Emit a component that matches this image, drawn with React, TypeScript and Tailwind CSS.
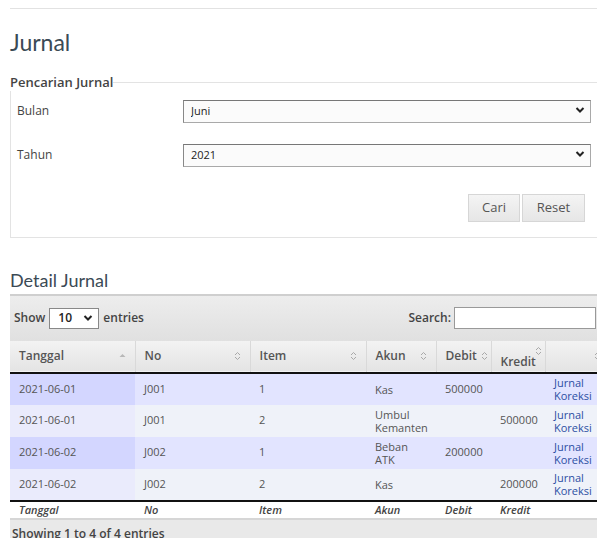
import { ReactNode } from 'react'

type Row = {
  tanggal: string
  no: string
  item: string
  akun: string
  debit: string
  kredit: string
}

const rows: Row[] = [
  { tanggal: '2021-06-01', no: 'J001', item: '1', akun: 'Kas', debit: '500000', kredit: '' },
  { tanggal: '2021-06-01', no: 'J001', item: '2', akun: 'Umbul\nKemanten', debit: '', kredit: '500000' },
  { tanggal: '2021-06-02', no: 'J002', item: '1', akun: 'Beban\nATK', debit: '200000', kredit: '' },
  { tanggal: '2021-06-02', no: 'J002', item: '2', akun: 'Kas', debit: '', kredit: '200000' },
]

const heading = { fontFamily: 'Lato, "Open Sans", sans-serif' }

function Chevron() {
  return (
    <svg width="10" height="7" viewBox="0 0 10 7" className="pointer-events-none absolute right-[6px] top-1/2 -translate-y-1/2">
      <path d="M1.5 1.5 L5 5 L8.5 1.5" fill="none" stroke="#222" strokeWidth="2" />
    </svg>
  )
}

function SortBoth() {
  return (
    <svg width="7" height="10" viewBox="0 0 7 10" className="shrink-0">
      <path d="M1 4 L3.5 1.5 L6 4" fill="none" stroke="#a8a8a8" strokeWidth="1" />
      <path d="M1 6 L3.5 8.5 L6 6" fill="none" stroke="#a8a8a8" strokeWidth="1" />
    </svg>
  )
}

function SortAsc() {
  return (
    <svg width="7" height="10" viewBox="0 0 7 10" className="shrink-0">
      <path d="M0.5 6 L3.5 3 L6.5 6 Z" fill="#b8b8b8" />
    </svg>
  )
}

function Th({ children, icon }: { children?: ReactNode; icon: ReactNode }) {
  return (
    <th className="h-[32px] px-[9px] text-left font-semibold text-[12px] text-[#555] align-middle border-r border-[#d9d9d9]">
      <div className="flex items-center justify-between gap-1">
        <span>{children}</span>
        {icon}
      </div>
    </th>
  )
}

export default function App() {
  return (
    <div
      className="w-[597px] h-[538px] overflow-hidden bg-white text-[#444]"
      style={{ fontFamily: '"Open Sans", "Noto Sans", sans-serif' }}
    >
      <div className="pt-[8px] pl-[10px]">
        <div className="border-t border-[#e2e2e2] w-[620px]" />
      </div>

      <h1 className="ml-[10px] mt-[19px] text-[23px] leading-[28px] text-[#3b4a55]" style={heading}>
        Jurnal
      </h1>

      <fieldset className="ml-[10px] mt-[18px] w-[600px] border border-[#e3e3e3] px-[6px] pb-[15px] pt-[6px]">
        <legend className="px-0 -ml-[7px] text-[13px] leading-[17px] font-semibold text-[#444]">Pencarian Jurnal</legend>

        <div className="flex items-center">
          <label className="w-[166px] mt-[3px] text-[12px] text-[#444]">Bulan</label>
          <div className="relative w-[408px]">
            <select className="appearance-none w-full h-[23px] border border-[#a9a9a9] border-t-[#777] border-l-[#888] bg-[#fbfbfb] pl-[7px] text-[11px] text-[#222]">
              <option>Juni</option>
            </select>
            <Chevron />
          </div>
        </div>

        <div className="flex items-center mt-[18px]">
          <label className="w-[166px] mt-[3px] text-[12px] text-[#444]">Tahun</label>
          <div className="relative w-[408px]">
            <select className="appearance-none w-full h-[23px] border border-[#a9a9a9] border-t-[#777] border-l-[#888] bg-[#fbfbfb] pl-[7px] text-[11px] text-[#222]">
              <option>2021</option>
            </select>
            <Chevron />
          </div>
        </div>

        <div className="flex justify-end gap-[2px] mt-[27px] pr-[18px]">
          <button className="w-[52px] h-[28px] border border-[#d6d6d6] bg-gradient-to-b from-[#f4f4f4] to-[#e6e6e6] text-[13px] text-[#555]">
            Cari
          </button>
          <button className="w-[63px] h-[28px] border border-[#d6d6d6] bg-gradient-to-b from-[#f4f4f4] to-[#e6e6e6] text-[13px] text-[#555]">
            Reset
          </button>
        </div>
      </fieldset>

      <h2 className="ml-[10px] mt-[31px] text-[18px] leading-[22px] text-[#3b4a55]" style={heading}>
        Detail Jurnal
      </h2>

      <div className="ml-[10px] mt-[3px] w-[610px]">
        <div className="h-[47px] flex items-center justify-between pl-[4px] pr-[24px] border-t-2 border-[#cfcfcf] bg-gradient-to-b from-[#ededed] to-[#e0e0e0]">
          <div className="flex items-center gap-[4px] text-[12px] font-semibold text-[#444]">
            <span>Show</span>
            <div className="relative w-[50px]">
              <select className="appearance-none w-full h-[21px] border border-[#888] bg-white pl-[8px] text-[12px] text-[#222]">
                <option>10</option>
              </select>
              <Chevron />
            </div>
            <span>entries</span>
          </div>
          <div className="flex items-center gap-[3px] text-[12px] font-semibold text-[#444]">
            <span>Search:</span>
            <input className="w-[142px] h-[22px] border border-[#999] bg-white" />
          </div>
        </div>

        <table className="table-fixed border-collapse w-[610px]">
          <colgroup>
            <col className="w-[125px]" />
            <col className="w-[115px]" />
            <col className="w-[116px]" />
            <col className="w-[70px]" />
            <col className="w-[55px]" />
            <col className="w-[54px]" />
            <col className="w-[75px]" />
          </colgroup>
          <thead>
            <tr className="bg-gradient-to-b from-[#f3f3f3] to-[#e4e4e4] border-b-2 border-[#111]">
              <Th icon={<SortAsc />}>Tanggal</Th>
              <Th icon={<SortBoth />}>No</Th>
              <Th icon={<SortBoth />}>Item</Th>
              <Th icon={<SortBoth />}>Akun</Th>
              <th className="h-[32px] pl-[9px] pr-[3px] text-left font-semibold text-[12px] text-[#555] border-r border-[#d9d9d9]">
                <div className="flex items-center justify-between">
                  <span>Debit</span>
                  <SortBoth />
                </div>
              </th>
              <th className="h-[32px] pl-[9px] pr-[3px] text-left font-semibold text-[12px] text-[#555] border-r border-[#d9d9d9]">
                <div className="flex flex-col pt-[2px]">
                  <span className="self-end -mb-[1px]">
                    <SortBoth />
                  </span>
                  <span className="leading-[14px]">Kredit</span>
                </div>
              </th>
              <th className="h-[32px] pl-[9px] pr-[19px] text-left">
                <div className="flex justify-end">
                  <SortBoth />
                </div>
              </th>
            </tr>
          </thead>
          <tbody className="text-[11px] text-[#555]">
            {rows.map((r, i) => {
              const odd = i % 2 === 0
              return (
                <tr key={i} className={`h-[32px] ${odd ? 'bg-[#e2e4ff]' : 'bg-[#eff2f9]'}`}>
                  <td className={`pl-[9px] ${odd ? 'bg-[#d3d6ff]' : 'bg-[#eaebfc]'}`}>{r.tanggal}</td>
                  <td className="pl-[9px]">{r.no}</td>
                  <td className="pl-[9px]">{r.item}</td>
                  <td className="pl-[9px] leading-[13px] whitespace-pre-line">{r.akun}</td>
                  <td className="pl-[9px]">{r.debit}</td>
                  <td className="pl-[9px]">{r.kredit}</td>
                  <td className="pl-[9px] text-[#2c4fa3]">
                    <span className="block leading-[13px]">Jurnal</span>
                    <span className="block leading-[13px]">Koreksi</span>
                  </td>
                </tr>
              )
            })}
          </tbody>
          <tfoot>
            <tr className="h-[17px] border-t-2 border-[#111] text-[11px] italic font-semibold text-[#444]">
              <td className="pl-[9px]">Tanggal</td>
              <td className="pl-[9px]">No</td>
              <td className="pl-[9px]">Item</td>
              <td className="pl-[9px]">Akun</td>
              <td className="pl-[9px]">Debit</td>
              <td className="pl-[9px]">Kredit</td>
              <td />
            </tr>
          </tfoot>
        </table>

        <div className="h-[24px] border-t-2 border-[#d6d6d6] bg-[#e9e9e9] pl-[2px] pt-[5px] text-[12px] font-semibold text-[#444]">
          Showing 1 to 4 of 4 entries
        </div>
      </div>
    </div>
  )
}
